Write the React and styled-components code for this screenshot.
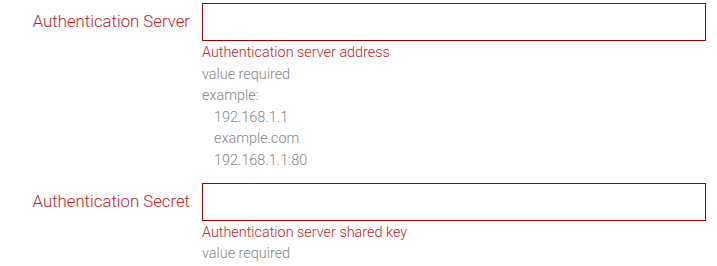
import React from "react";
import styled, { createGlobalStyle } from "styled-components";

const Global = createGlobalStyle`
  html, body { margin: 0; padding: 0; background: #fff; }
  body { font-family: Roboto, "Noto Sans", sans-serif; font-weight: 300; }
`;

const Form = styled.div`
  display: flex;
  flex-direction: column;
  gap: 11px;
  padding: 3px 11px 0 0;
`;

const Row = styled.div`
  display: grid;
  grid-template-columns: 190px 1fr;
  column-gap: 12px;
  align-items: start;
`;

const Label = styled.label`
  text-align: right;
  color: #be2429;
  font-size: 16.75px;
  line-height: 36px;
  white-space: nowrap;
`;

const Field = styled.div`
  display: flex;
  flex-direction: column;
`;

const Input = styled.input`
  box-sizing: border-box;
  height: 38px;
  width: 100%;
  border: 1px solid #a30000;
  border-radius: 0;
  margin: 0 0 1px;
  padding: 0 8px;
  outline: none;
  background: #fff;
  font: inherit;
`;

const Hint = styled.div`
  font-size: 14.4px;
  line-height: 1.5;
  color: ${(p) => (p.$error ? "#be2429" : "#858585")};
  padding-left: ${(p) => (p.$indent ? "12px" : "0")};
`;

export default function App() {
  return (
    <>
      <Global />
      <Form>
        <Row>
          <Label>Authentication Server</Label>
          <Field>
            <Input type="text" />
            <Hint $error>Authentication server address</Hint>
            <Hint>value required</Hint>
            <Hint>example:</Hint>
            <Hint $indent>192.168.1.1</Hint>
            <Hint $indent>example.com</Hint>
            <Hint $indent>192.168.1.1:80</Hint>
          </Field>
        </Row>
        <Row>
          <Label>Authentication Secret</Label>
          <Field>
            <Input type="text" />
            <Hint $error>Authentication server shared key</Hint>
            <Hint>value required</Hint>
          </Field>
        </Row>
      </Form>
    </>
  );
}
